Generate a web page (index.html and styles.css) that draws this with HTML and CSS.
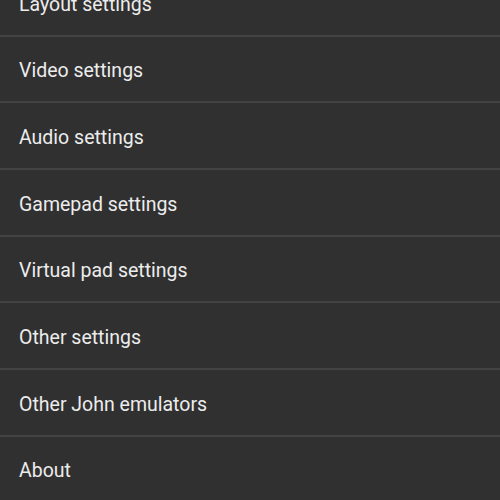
FILE: index.html
```html
<!DOCTYPE html>
<html>
<head>
<meta charset="utf-8">
<link rel="stylesheet" href="styles.css">
</head>
<body>
<ul class="menu">
  <li class="item">Layout settings</li>
  <li class="item">Video settings</li>
  <li class="item">Audio settings</li>
  <li class="item">Gamepad settings</li>
  <li class="item">Virtual pad settings</li>
  <li class="item">Other settings</li>
  <li class="item">Other John emulators</li>
  <li class="item">About</li>
</ul>
</body>
</html>
```
FILE: styles.css
```css
html, body {
  margin: 0;
  padding: 0;
  background: #303030;
  height: 100%;
  overflow: hidden;
}
.menu {
  list-style: none;
  margin: -30px 0 0 0;
  padding: 0;
}
.item {
  height: 60.67px;
  padding: 4px 0 0 19px;
  display: flex;
  align-items: center;
  font-family: Roboto, "Liberation Sans", sans-serif;
  font-size: 19.5px;
  color: #ececec;
  border-bottom: 2px solid #434343;
}
```
